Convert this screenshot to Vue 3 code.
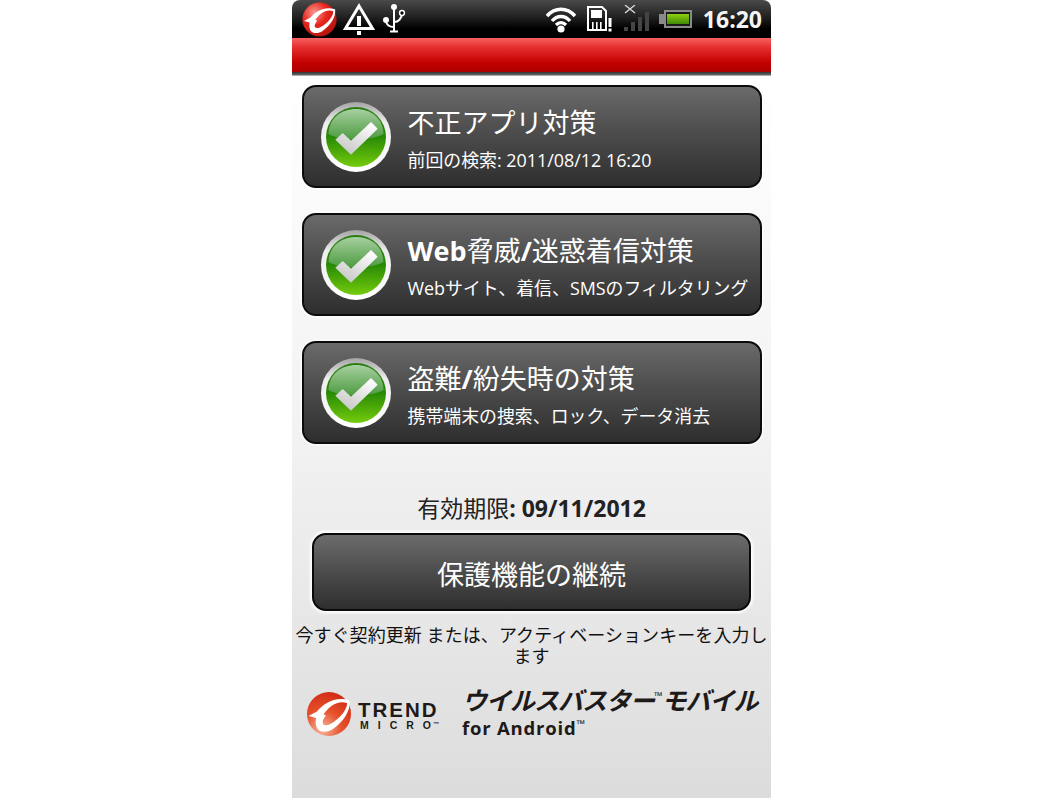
<script setup>
const cards = [
  { title: '不正アプリ対策', sub: '前回の検索: 2011/08/12 16:20' },
  { title: 'Web脅威/迷惑着信対策', sub: 'Webサイト、着信、SMSのフィルタリング' },
  { title: '盗難/紛失時の対策', sub: '携帯端末の捜索、ロック、データ消去' },
]

// latin runs in the titles are bold, the japanese stays regular
const parts = (s) => s.split(/([A-Za-z/]+)/).filter(Boolean)
const isLatin = (s) => /^[A-Za-z/]+$/.test(s)

const swoosh = 'M2.500 25L11 20.500C18 12 30 5 43.500 9.500C45 20 37 31 27 38C21 42 13 42 10.500 36C9.500 33 9.500 30 10 27ZM17.500 23.500L20 24.500C17 28 16 31 17 33C19 35.500 23 34 27 31.500C35 26 41.500 18 41 12C32 9 23 15 17.500 23.500Z'
</script>

<template>
  <div class="page">
    <div class="phone">
      <div class="status">
        <div class="status-left">
          <svg class="tm" width="35" height="35" viewBox="0 0 46 46">
            <defs>
              <radialGradient id="tmRed" cx="0.35" cy="0.3" r="0.8">
                <stop offset="0" stop-color="#f79a90" />
                <stop offset="0.45" stop-color="#e8271f" />
                <stop offset="1" stop-color="#a8120a" />
              </radialGradient>
            </defs>
            <circle cx="23" cy="23" r="22.500" fill="url(#tmRed)" />
            <path :d="swoosh" fill="#fff" fill-rule="evenodd" />
          </svg>
          <svg class="warn" width="32" height="32" viewBox="0 0 32 32">
            <path d="M16 3L29.500 25.500H2.500Z" fill="none" stroke="#fff" stroke-width="3" />
            <rect x="14" y="13" width="4" height="10" fill="#fff" />
            <rect x="14" y="28" width="4" height="4" fill="#fff" />
          </svg>
          <svg class="usb" width="24" height="30" viewBox="0 0 24 30">
            <path d="M12 3V27M8 27.500H16M12 23C8 23 4 21 4 16M12 18C16 18 20 15 20 9" fill="none" stroke="#fff" stroke-width="2" />
            <circle cx="12" cy="3" r="3" fill="#fff" />
            <circle cx="4" cy="16" r="3" fill="#fff" />
            <circle cx="20" cy="9" r="2.400" fill="#000" stroke="#fff" stroke-width="1.500" />
          </svg>
        </div>
        <div class="status-right">
          <svg class="wifi" width="32" height="28" viewBox="0 0 32 28">
            <path d="M2 11C10 2 22 2 30 11M7 16C12 10 20 10 25 16M11 20C14 17 18 17 21 20" fill="none" stroke="#fff" stroke-width="3.400" />
            <circle cx="16" cy="24" r="3.600" fill="#fff" />
          </svg>
          <svg class="sd" width="28" height="26" viewBox="0 0 28 26">
            <path d="M2 1H16L20 5V24H2Z" fill="none" stroke="#fff" stroke-width="2" />
            <rect x="5" y="4" width="11" height="8" fill="#fff" />
            <rect x="6" y="16" width="1.600" height="7" fill="#fff" />
            <rect x="10" y="16" width="1.600" height="7" fill="#fff" />
            <rect x="14" y="16" width="1.600" height="7" fill="#fff" />
            <rect x="22.500" y="12" width="3" height="9" fill="#fff" />
            <rect x="22.500" y="22.500" width="3" height="3" fill="#fff" />
          </svg>
          <svg class="signal" width="28" height="28" viewBox="0 0 28 28">
            <path d="M2 0L12 8M12 0L2 8" stroke="#ddd" stroke-width="1.300" />
            <rect x="1" y="22" width="4" height="4" fill="#444" />
            <rect x="8" y="17" width="4" height="9" fill="#444" />
            <rect x="15" y="12" width="4" height="14" fill="#444" />
            <rect x="22" y="7" width="4" height="19" fill="#444" />
          </svg>
          <div class="battery"><div class="battery-fill"></div></div>
          <span class="clock">16:20</span>
        </div>
      </div>
      <div class="redbar"></div>

      <div class="content">
        <div class="cards">
          <div v-for="c in cards" :key="c.title" class="card">
            <svg class="check" width="72" height="72" viewBox="0 0 72 72">
              <defs>
                <linearGradient id="ring" x1="0" y1="0" x2="0" y2="1">
                  <stop offset="0" stop-color="#a4a4a4" />
                  <stop offset="0.3" stop-color="#ededed" />
                  <stop offset="1" stop-color="#ffffff" />
                </linearGradient>
                <linearGradient id="ball" x1="0" y1="0" x2="0" y2="1">
                  <stop offset="0" stop-color="#2a7a10" />
                  <stop offset="0.5" stop-color="#288a04" />
                  <stop offset="1" stop-color="#74cc0c" />
                </linearGradient>
                <linearGradient id="gloss" x1="0" y1="0" x2="0" y2="1">
                  <stop offset="0" stop-color="#a6cfa0" />
                  <stop offset="1" stop-color="#4f9c42" />
                </linearGradient>
                <linearGradient id="tick" x1="0.800" y1="0" x2="0.200" y2="1">
                  <stop offset="0" stop-color="#ffffff" />
                  <stop offset="1" stop-color="#c4c4c4" />
                </linearGradient>
              </defs>
              <circle cx="36" cy="36" r="35" fill="url(#ring)" />
              <circle cx="36" cy="36" r="30" fill="url(#ball)" />
              <path d="M8.500 33C9 17 21 8 36 8C51 8 63 17 63.500 33C52 40 20 40 8.500 33Z" fill="url(#gloss)" />
              <path d="M15.300 38.700L22.700 32L31 39.700L51 21L57.700 27.700L31 53.700Z" fill="url(#tick)" />
            </svg>
            <div class="card-text">
              <div class="card-title">
                <span v-for="(p, i) in parts(c.title)" :key="i" :class="{ bold: isLatin(p) }">{{ p }}</span>
              </div>
              <div class="card-sub">{{ c.sub }}</div>
            </div>
          </div>
        </div>

        <div class="expiry">有効期限<b>: 09/11/2012</b></div>
        <div class="renew"><span>保護機能の継続</span></div>
        <div class="note">今すぐ契約更新 または、アクティベーションキーを入力します</div>

        <div class="brand">
          <svg class="brand-ball" width="46" height="46" viewBox="0 0 46 46">
            <defs>
              <radialGradient id="brandRed" cx="0.35" cy="0.85" r="0.95">
                <stop offset="0" stop-color="#f8b8a0" />
                <stop offset="0.45" stop-color="#e6532c" />
                <stop offset="1" stop-color="#cf2412" />
              </radialGradient>
            </defs>
            <circle cx="23" cy="23" r="22" fill="url(#brandRed)" />
            <path :d="swoosh" fill="#fff" fill-rule="evenodd" />
          </svg>
          <div class="tm-words">
            <div class="trend">TREND</div>
            <div class="micro">MICR<span class="micro-last">O</span><sup>™</sup></div>
          </div>
          <div class="product">
            <div class="vb">ウイルスバスター<sup>™</sup>モバイル</div>
            <div class="android">for Android<sup>™</sup></div>
          </div>
        </div>
      </div>
    </div>
  </div>
</template>

<style>
html, body {
  margin: 0;
  background: #fff;
}
</style>

<style scoped>
.page {
  width: 1064px;
  height: 798px;
  display: flex;
  justify-content: center;
  overflow: hidden;
  font-family: "Open Sans", "Noto Sans CJK JP", sans-serif;
}

.phone {
  width: 479px;
  height: 798px;
  margin-right: 1px;
  display: flex;
  flex-direction: column;
  background: linear-gradient(#fff 76px, #f2f2f2 440px, #dcdcdc 798px);
}

.status {
  height: 38px;
  flex: none;
  display: flex;
  justify-content: space-between;
  align-items: center;
  background: linear-gradient(#4a4a4a, #1c1c1c 50%, #000 75%);
  border-radius: 8px 8px 0 0;
}

.status-left {
  display: flex;
  align-items: center;
  padding-left: 10px;
}

.warn {
  margin-left: 6px;
}

.usb {
  margin-left: 7px;
}

.status-right {
  display: flex;
  align-items: center;
  padding-right: 9px;
}

.wifi {
  margin-right: 9px;
}

.sd {
  margin-right: 9px;
}

.signal {
  margin-right: 8px;
}

.battery {
  width: 28px;
  height: 18px;
  box-sizing: border-box;
  border: 2px solid #8a8a8a;
  padding: 2px 1px;
  margin-left: 5px;
  margin-right: 11px;
  position: relative;
  background: #1a1a1a;
}

.battery::before {
  content: "";
  position: absolute;
  left: -7px;
  top: 2px;
  width: 5px;
  height: 10px;
  background: #8a8a8a;
}

.battery-fill {
  height: 100%;
  background: linear-gradient(#8fd010, #3f8a05);
}

.clock {
  color: #f4f4f4;
  font: 700 23px "Open Sans", sans-serif;
}

.redbar {
  height: 38px;
  flex: none;
  background: linear-gradient(#f76060 0, #e62e2e 25%, #c20000 65%, #b00000 89%, #2e2e2e 89%, #666 97%, #ddd 100%);
}

.content {
  flex: 1;
  display: flex;
  flex-direction: column;
  align-items: center;
  padding-top: 9px;
}

.cards {
  display: flex;
  flex-direction: column;
  gap: 25px;
}

.card {
  width: 460px;
  height: 103px;
  box-sizing: border-box;
  border: 2px solid #0c0c0c;
  border-radius: 14px;
  background: linear-gradient(#6a6a6a, #505050 40%, #2e2e2e);
  box-shadow: 0 0 3px 1px #fff;
  display: flex;
  align-items: center;
  padding-left: 16px;
  color: #fff;
}

.check {
  flex: none;
}

.card-text {
  margin-left: 16px;
  margin-top: 4px;
}

.card-title {
  font-size: 27px;
  line-height: 36px;
  white-space: nowrap;
}

.card-title .bold {
  font-weight: 700;
}

.card-sub {
  font-size: 17.9px;
  line-height: 24px;
  margin-top: 7px;
  white-space: nowrap;
}

.expiry {
  margin-top: 48px;
  height: 32px;
  font-size: 23px;
  line-height: 32px;
  color: #222;
  white-space: nowrap;
}

.renew {
  margin-top: 9px;
  width: 439px;
  height: 78px;
  box-sizing: border-box;
  border: 2px solid #0a0a0a;
  border-radius: 14px;
  background: linear-gradient(#6c6c6c, #4c4c4c 50%, #2e2e2e);
  box-shadow: 0 0 3px 2px #fff;
  display: flex;
  align-items: center;
  justify-content: center;
  font-size: 27px;
  color: #fff;
}

.renew span {
  margin-top: 2px;
}

.note {
  margin-top: 14px;
  width: 476px;
  text-align: center;
  font-size: 18px;
  line-height: 21px;
  letter-spacing: 0.07px;
  color: #111;
}

.brand {
  margin-top: 16px;
  width: 479px;
  box-sizing: border-box;
  padding-left: 14px;
  display: flex;
  align-items: flex-start;
  color: #1e1a1a;
}

.brand-ball {
  margin-top: 8px;
  flex: none;
}

.tm-words {
  margin-left: 6px;
  margin-top: 18px;
  width: 84px;
  flex: none;
  font-family: "Liberation Sans", sans-serif;
  font-weight: 700;
  white-space: nowrap;
}

.trend {
  font-size: 20.5px;
  line-height: 17px;
  letter-spacing: 2px;
}

.micro {
  font-size: 10.5px;
  line-height: 13px;
  letter-spacing: 9px;
  margin-left: 2px;
  margin-top: 1px;
}

.micro-last {
  letter-spacing: 0;
}

.micro sup {
  font-size: 6px;
  letter-spacing: 0;
  margin-left: 2px;
  vertical-align: 3px;
  line-height: 0;
}

.product {
  margin-left: 20px;
}

.vb {
  font-size: 25px;
  line-height: 26px;
  height: 26px;
  margin-top: 4px;
  font-weight: 700;
  font-style: italic;
  white-space: nowrap;
  letter-spacing: -1px;
}

.vb sup {
  font-size: 11px;
  font-style: normal;
  vertical-align: 10px;
  line-height: 0;
}

.android {
  font: 700 18.5px/22px "Open Sans", sans-serif;
  margin-top: 4px;
  letter-spacing: 0.8px;
}

.android sup {
  font-size: 11px;
  vertical-align: 7px;
  line-height: 0;
  letter-spacing: 0;
}
</style>
